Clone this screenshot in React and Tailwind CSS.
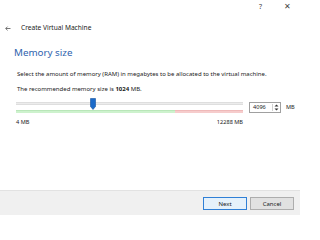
import React from "react";

const Thumb = () => (
  <svg width="6" height="12" viewBox="0 0 6 12" className="absolute left-[74px] top-[1px]">
    <path d="M0.5 0.5 H5.5 V8.5 L3 11.5 L0.5 8.5 Z" fill="#1b6ac9" stroke="#15539e" strokeWidth="0.6" />
  </svg>
);

const App = () => {
  return (
    <div
      className="w-[300px] h-[215px] flex flex-col bg-white text-[#1a1a1a] overflow-hidden"
      style={{ fontFamily: '"Noto Sans", "Open Sans", sans-serif' }}
    >
      {/* Window controls */}
      <div className="h-[12px] flex items-center justify-end pr-[9px] gap-[22px] text-[7px] text-[#444]">
        <span className="leading-none">?</span>
        <span className="leading-none text-[8px]">✕</span>
      </div>

      {/* Title */}
      <div className="mt-[12px] h-[8px] flex items-center pl-[5px]">
        <svg width="6" height="5" viewBox="0 0 6 5" className="mr-[10px]">
          <path d="M5.5 2.5 H0.8 M2.6 0.6 L0.7 2.5 L2.6 4.4" stroke="#555" strokeWidth="0.8" fill="none" />
        </svg>
        <span className="text-[6.6px] leading-none">Create Virtual Machine</span>
      </div>

      {/* Heading */}
      <div className="mt-[15px] h-[12px] flex items-center pl-[14px] text-[9.8px] leading-none text-[#2f63ae]">
        Memory size
      </div>

      <div className="mt-[11px] h-[8px] flex items-center pl-[17px] text-[6px] leading-none whitespace-nowrap">
        Select the amount of memory (RAM) in megabytes to be allocated to the virtual machine.
      </div>
      <div className="mt-[7px] h-[8px] flex items-center pl-[17px] text-[6px] leading-none">
        The recommended memory size is&nbsp;<b>1024</b>&nbsp;MB.
      </div>

      {/* Slider row */}
      <div className="mt-[4px] h-[15px] flex items-start pl-[16px]">
        <div className="relative w-[227px] h-[15px]">
          <div className="absolute left-0 right-0 top-[5px] h-[3px] bg-[#ececec] border-y border-[#dedede]" />
          <div className="absolute left-0 top-[13px] h-[3px] w-[159px] bg-[#cdf2cd] border-t border-[#b9e6b9]" />
          <div className="absolute left-[159px] right-0 top-[13px] h-[3px] bg-[#f6cccc] border-t border-[#efb9b9]" />
          <Thumb />
        </div>
        <div className="ml-[6px] mt-[5px] w-[32px] h-[11px] border border-[#a0a0a0] flex items-center justify-between pl-[3px] pr-[1px]">
          <span className="text-[5.6px] leading-none">4096</span>
          <div className="flex flex-col items-center gap-[1px] border-l border-[#d0d0d0] pl-[1px]">
            <svg width="5" height="3" viewBox="0 0 5 3">
              <path d="M0.5 2.6 L2.5 0.4 L4.5 2.6 Z" fill="#333" />
            </svg>
            <svg width="5" height="3" viewBox="0 0 5 3">
              <path d="M0.5 0.4 L2.5 2.6 L4.5 0.4 Z" fill="#333" />
            </svg>
          </div>
        </div>
        <span className="ml-[5px] mt-[5px] h-[11px] flex items-center text-[5.6px] leading-none">MB</span>
      </div>

      {/* Scale labels */}
      <div className="mt-[7px] h-[8px] w-[227px] ml-[16px] flex items-center justify-between text-[5.6px] leading-none">
        <span>4 MB</span>
        <span>12288 MB</span>
      </div>

      <div className="flex-1" />

      {/* Footer */}
      <div className="h-[25px] bg-[#f0f0f0] border-t border-[#e2e2e2] flex items-start justify-end pt-[6px] pr-[6px] gap-[3px]">
        <button className="w-[44px] h-[13px] bg-[#e5f1fb] border border-[#2f7fd6] text-[6px] leading-none flex items-center justify-center">
          Next
        </button>
        <button className="w-[44px] h-[13px] bg-[#e1e1e1] border border-[#adadad] text-[6px] leading-none flex items-center justify-center">
          Cancel
        </button>
      </div>
    </div>
  );
};

export default App;
